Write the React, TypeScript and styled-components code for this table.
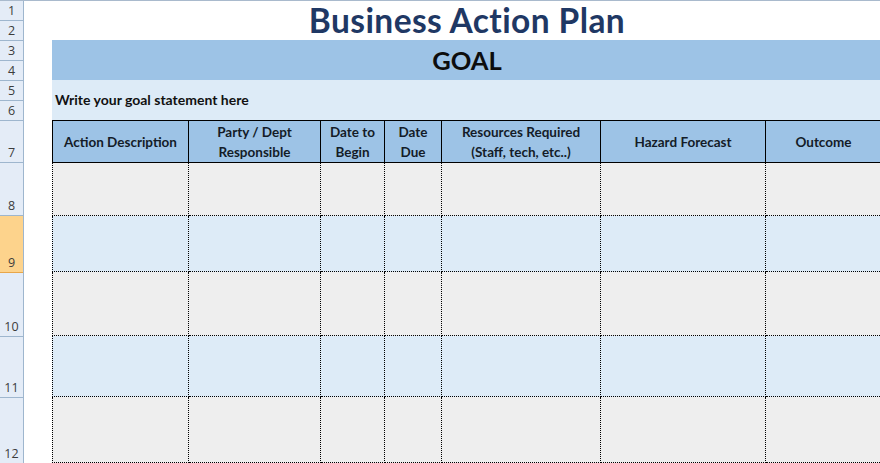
import React from "react";
import styled, { createGlobalStyle } from "styled-components";

const Global = createGlobalStyle`
  html, body { margin: 0; padding: 0; background: #ffffff; }
  body { font-family: Lato, "Open Sans", sans-serif; overflow: hidden; }
`;

const COLS = [137, 132, 64, 57, 159, 165, 116];
const COLS_TEMPLATE = COLS.map((c) => `${c}px`).join(" ");

const Page = styled.div`
  display: flex;
  width: 880px;
  height: 463px;
  overflow: hidden;
  border-top: 1px solid #a9bacd;
  box-sizing: border-box;
`;

const RowHeaders = styled.div`
  flex: 0 0 23px;
  display: flex;
  flex-direction: column;
  background: #e4ecf7;
  border-right: 1px solid #9eb6ce;
`;

const RowNum = styled.div<{ $h: number; $active?: boolean }>`
  height: ${(p) => p.$h}px;
  flex: 0 0 auto;
  box-sizing: border-box;
  border-bottom: 1px solid ${(p) => (p.$active ? "#e8a64a" : "#9eb6ce")};
  background: ${(p) => (p.$active ? "#fdd38c" : "transparent")};
  display: flex;
  align-items: flex-end;
  justify-content: center;
  padding-bottom: 1px;
  font-family: "Open Sans", Lato, sans-serif;
  font-size: 12.5px;
  line-height: 16px;
  color: #3c3c3c;
`;

const Gutter = styled.div`
  flex: 0 0 28px;
`;

const Sheet = styled.div`
  flex: 0 0 830px;
  display: flex;
  flex-direction: column;
`;

const TitleRow = styled.div`
  height: 39px;
  display: flex;
  align-items: center;
  justify-content: center;
  font-family: Lato, sans-serif;
  font-weight: 700;
  font-size: 33.5px;
  line-height: 34px;
  color: #1f3864;
  letter-spacing: 0.4px;
  white-space: nowrap;
`;

const GoalBar = styled.div`
  height: 40px;
  background: #9dc3e6;
  display: flex;
  align-items: center;
  justify-content: center;
  font-weight: 700;
  font-size: 25.5px;
  color: #0d0d0d;
`;

const GoalStatement = styled.div`
  height: 40px;
  background: #ddebf7;
  display: flex;
  align-items: center;
  padding-left: 3px;
  font-weight: 700;
  font-size: 14px;
  color: #111;
`;

const HeaderRow = styled.div`
  display: grid;
  grid-template-columns: ${COLS_TEMPLATE};
  height: 43px;
  box-sizing: border-box;
  background: #9dc3e6;
  border-top: 1px solid #000;
  border-bottom: 1px solid #000;
`;

const HeaderCell = styled.div<{ $first?: boolean }>`
  box-sizing: border-box;
  border-right: 1px solid #000;
  border-left: ${(p) => (p.$first ? "1px solid #000" : "none")};
  display: flex;
  align-items: center;
  justify-content: center;
  text-align: center;
  font-weight: 700;
  font-size: 13.5px;
  line-height: 20px;
  color: #141c28;
  padding-top: 1px;
`;

const DataRow = styled.div<{ $h: number; $alt?: boolean }>`
  display: grid;
  grid-template-columns: ${COLS_TEMPLATE};
  height: ${(p) => p.$h}px;
  background: ${(p) => (p.$alt ? "#ddebf7" : "#eeeeee")};
`;

const DataCell = styled.div<{ $first?: boolean }>`
  box-sizing: border-box;
  border-right: 1px dotted #000;
  border-bottom: 1px dotted #000;
  border-left: ${(p) => (p.$first ? "1px dotted #000" : "none")};
`;

const headers: React.ReactNode[] = [
  "Action Description",
  <>Party / Dept<br />Responsible</>,
  <>Date to<br />Begin</>,
  <>Date<br />Due</>,
  <>Resources Required<br />(Staff, tech, etc..)</>,
  "Hazard Forecast",
  "Outcome",
];

const rowNums: { n: number; h: number; active?: boolean }[] = [
  { n: 1, h: 20 },
  { n: 2, h: 20 },
  { n: 3, h: 20 },
  { n: 4, h: 20 },
  { n: 5, h: 20 },
  { n: 6, h: 20 },
  { n: 7, h: 42 },
  { n: 8, h: 53 },
  { n: 9, h: 57, active: true },
  { n: 10, h: 64 },
  { n: 11, h: 61 },
  { n: 12, h: 66 },
];

const dataRows = [
  { h: 53, alt: false },
  { h: 57, alt: true },
  { h: 64, alt: false },
  { h: 61, alt: true },
  { h: 66, alt: false },
];

export default function App() {
  return (
    <>
      <Global />
      <Page>
        <RowHeaders>
          {rowNums.map((r) => (
            <RowNum key={r.n} $h={r.h} $active={r.active}>
              {r.n}
            </RowNum>
          ))}
        </RowHeaders>
        <Gutter />
        <Sheet>
          <TitleRow>Business Action Plan</TitleRow>
          <GoalBar>GOAL</GoalBar>
          <GoalStatement>Write your goal statement here</GoalStatement>
          <HeaderRow>
            {headers.map((h, i) => (
              <HeaderCell key={i} $first={i === 0}>
                {h}
              </HeaderCell>
            ))}
          </HeaderRow>
          {dataRows.map((r, ri) => (
            <DataRow key={ri} $h={r.h} $alt={r.alt}>
              {COLS.map((_, ci) => (
                <DataCell key={ci} $first={ci === 0} />
              ))}
            </DataRow>
          ))}
        </Sheet>
      </Page>
    </>
  );
}
